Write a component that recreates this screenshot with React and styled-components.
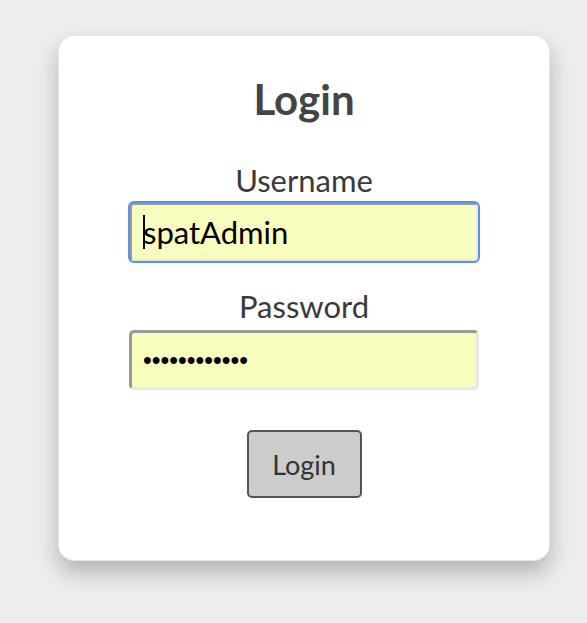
import React from "react";
import styled, { createGlobalStyle } from "styled-components";

const GlobalStyle = createGlobalStyle`
  html, body {
    margin: 0;
    padding: 0;
    background: #ededed;
    font-family: Lato, "Open Sans", sans-serif;
  }
`;

const Page = styled.div`
  padding: 35px 0 62px 58px;
`;

const Card = styled.div`
  width: 492px;
  box-sizing: border-box;
  background: #fff;
  border-radius: 16px;
  border: 1px solid #e6e6e6;
  box-shadow: 0 12px 22px rgba(0, 0, 0, 0.24);
  padding: 39px 0 62px;
  display: flex;
  flex-direction: column;
  align-items: center;
  color: #444;
`;

const Title = styled.h1`
  margin: 0 0 40px;
  font-size: 42px;
  line-height: 48px;
  font-weight: 700;
  color: #444;
`;

const Form = styled.form`
  display: flex;
  flex-direction: column;
  align-items: center;
`;

const Field = styled.div`
  display: flex;
  flex-direction: column;
  align-items: center;
  margin-bottom: ${(p) => p.$gap}px;
`;

const Label = styled.label`
  font-size: 31px;
  line-height: 34px;
  color: #3a3a3a;
  margin-bottom: ${(p) => p.$gap}px;
`;

const InputWrap = styled.div`
  position: relative;
`;

const Input = styled.input`
  width: 350px;
  height: 60px;
  box-sizing: border-box;
  border: 3px solid;
  border-color: #9a9a9a #e8e8e8 #e8e8e8 #9a9a9a;
  border-radius: 5px;
  background: #f9fcbf;
  padding: 0 11px;
  font-family: ${(p) =>
    p.type === "password" ? '"Liberation Sans", sans-serif' : 'Lato, "Open Sans", sans-serif'};
  font-size: ${(p) => (p.type === "password" ? "25px" : "31px")};
  color: #000;
  outline: ${(p) => (p.$focused ? "2px solid #5b8fe9" : "none")};
  outline-offset: -1px;
`;

const Caret = styled.span`
  position: absolute;
  left: 14px;
  top: 13px;
  width: 2px;
  height: 34px;
  background: #000;
`;

const Button = styled.button`
  width: 115px;
  height: 68px;
  background: #cccccc;
  border: 2px solid #555;
  border-radius: 5px;
  font-family: Lato, "Open Sans", sans-serif;
  font-size: 27px;
  color: #333;
  cursor: pointer;
`;

export default function App() {
  return (
    <>
      <GlobalStyle />
      <Page>
        <Card>
          <Title>Login</Title>
          <Form onSubmit={(e) => e.preventDefault()}>
            <Field $gap={27}>
              <Label $gap={5}>Username</Label>
              <InputWrap>
                <Input type="text" defaultValue="spatAdmin" $focused />
                <Caret />
              </InputWrap>
            </Field>
            <Field $gap={40}>
              <Label $gap={7}>Password</Label>
              <Input type="password" defaultValue="spatAdmin123" />
            </Field>
            <Button type="submit">Login</Button>
          </Form>
        </Card>
      </Page>
    </>
  );
}
